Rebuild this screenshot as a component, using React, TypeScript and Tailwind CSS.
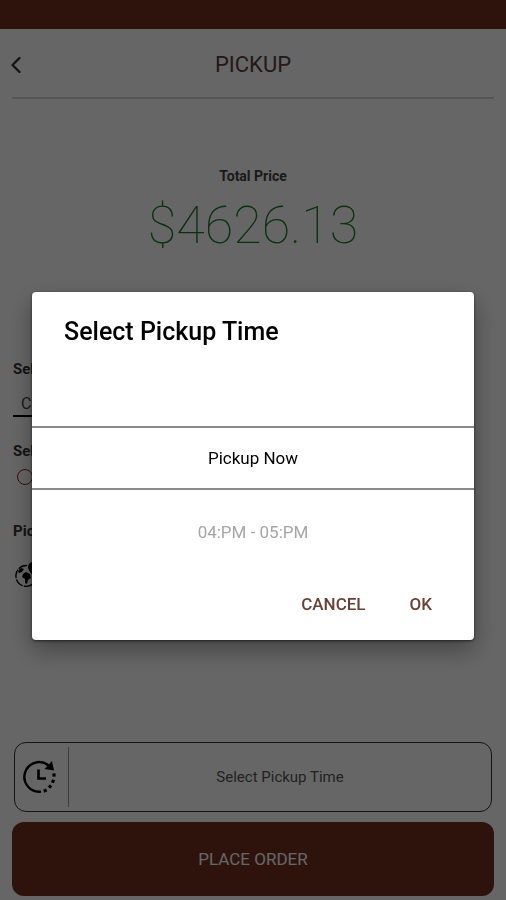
import { useState } from 'react';
import { ChevronLeft } from 'lucide-react';

const slots = ['Pickup Now', '04:PM - 05:PM'];

function ClockIcon() {
  return (
    <svg viewBox="0 0 36 36" className="h-9 w-9" fill="none" stroke="black" strokeWidth="2.4" aria-hidden="true">
      <path d="M20 32.6A14.8 14.8 0 1 1 27.5 6.4" />
      <path d="M33 11.5 31 2 23.5 10z" fill="black" stroke="none" />
      <path d="M17.5 10.5v9H25" strokeWidth="2.6" />
      <g fill="black" stroke="none">
        <rect x="31.4" y="14.4" width="3.2" height="3.2" />
        <rect x="30.4" y="20.6" width="3.2" height="3.2" transform="rotate(20 32 22.2)" />
        <rect x="27.4" y="26" width="3.2" height="3.2" transform="rotate(40 29 27.6)" />
        <rect x="22.6" y="30" width="3.2" height="3.2" transform="rotate(65 24.2 31.6)" />
      </g>
    </svg>
  );
}

function GlobePinIcon() {
  return (
    <svg viewBox="0 0 28 28" className="h-7 w-7" fill="none" stroke="black" strokeWidth="1.4" aria-hidden="true">
      <path d="M14 4.6A10.4 10.4 0 1 0 23.5 17" strokeDasharray="9 1.2" />
      <path d="M5 10l3-3 3 1-2 3-3 1zM10 13l3-2 4 2 1 4-3 2-1 4-2-1v-4l-3-2z" fill="black" stroke="none" />
      <path d="M20 1a5 5 0 0 0-5 5c0 3.5 5 8.500 5 8.500s5-5 5-8.500a5 5 0 0 0-5-5z" fill="black" stroke="none" />
    </svg>
  );
}

function StatusAndHeader() {
  return (
    <>
      <div className="h-[29px] bg-[#73301e]" />
      <header className="mx-3 grid h-[70px] grid-cols-[1fr_auto_1fr] items-center border-b-2 border-[#d4d4d4]">
        <button type="button" aria-label="Back" className="-ml-[10px] w-7 pt-[3px] text-[#333]">
          <ChevronLeft className="h-7 w-7" strokeWidth={2} />
        </button>
        <h1 className="pt-[3px] text-[22px] leading-6 text-[#5a3f38]">PICKUP</h1>
      </header>
    </>
  );
}

function OrderForm() {
  return (
    <div className="flex flex-col px-[13px] text-[15px]">
      <label htmlFor="store" className="leading-5 font-bold text-[#333]">Select Store</label>
      <input
        id="store"
        type="text"
        defaultValue="Cafe"
        className="mt-2 h-[30px] w-2/3 border-b-2 border-black px-2 pt-1 text-base text-[#444]"
      />
      <fieldset className="mt-6">
        <legend className="leading-5 font-bold text-[#333]">Select Payment</legend>
        <label className="mt-1 flex h-8 items-start gap-2 px-1">
          <input
            type="radio"
            name="payment"
            className="mt-1 h-4 w-4 appearance-none rounded-full border border-[#73301e]"
          />
          Cash
        </label>
      </fieldset>
      <h2 className="mt-6 leading-5 font-bold text-[#333]">Pickup</h2>
      <div className="mt-5">
        <GlobePinIcon />
      </div>
    </div>
  );
}

function PickupDialog({ onClose }: { onClose: () => void }) {
  const [selected, setSelected] = useState(slots[0]);

  return (
    <div className="fixed inset-0 flex items-center bg-black/60 px-8 pt-8">
      <div
        role="dialog"
        aria-modal="true"
        aria-labelledby="dialog-title"
        className="w-full rounded-sm bg-white shadow-[0_10px_24px_rgba(0,0,0,0.35),0_1px_3px_rgba(0,0,0,0.6)]"
      >
        <h2 id="dialog-title" className="px-8 pt-6 text-[25px] leading-8 font-medium text-black">
          Select Pickup Time
        </h2>
        <div className="mt-[78px] flex flex-col text-[17px] leading-6">
          {slots.map((slot) => (
            <button
              key={slot}
              type="button"
              onClick={() => setSelected(slot)}
              className={
                slot === selected
                  ? 'h-16 border-y-2 border-[#8a8a8a] text-black'
                  : 'h-[84px] text-[#a6a6a6]'
              }
            >
              {slot}
            </button>
          ))}
        </div>
        <div className="flex justify-end gap-3 px-[26px] pt-[10px] pb-4 text-[17px] leading-6 font-medium text-[#6b4138]">
          <button type="button" onClick={onClose} className="h-10 px-4">CANCEL</button>
          <button type="button" onClick={onClose} className="h-10 px-4">OK</button>
        </div>
      </div>
    </div>
  );
}

export default function App() {
  const [open, setOpen] = useState(true);

  return (
    <div className="flex min-h-screen flex-col bg-white font-[Roboto,sans-serif] text-black">
      <StatusAndHeader />

      <main className="flex flex-1 flex-col">
        <section className="pt-[67px] pb-[103px] text-center">
          <p className="text-sm leading-5 font-bold text-[#444]">Total Price</p>
          <p className="mt-[10px] text-[52px] leading-[60px] font-thin text-[#1b7a2e]">$4626.13</p>
        </section>
        <OrderForm />
      </main>

      <footer className="flex flex-col gap-[10px] px-3 pb-1">
        <button
          type="button"
          onClick={() => setOpen(true)}
          className="mx-[2px] flex h-[70px] items-center rounded-xl border border-[#333]"
        >
          <span className="flex w-[54px] border-r border-[#999] py-3 pl-[6px]">
            <ClockIcon />
          </span>
          <span className="flex-1 text-[15px] leading-5 text-[#555]">Select Pickup Time</span>
        </button>
        <button type="button" className="h-[74px] rounded-xl bg-[#73301e] text-[17px] leading-6 text-white">
          PLACE ORDER
        </button>
      </footer>

      {open && <PickupDialog onClose={() => setOpen(false)} />}
    </div>
  );
}
